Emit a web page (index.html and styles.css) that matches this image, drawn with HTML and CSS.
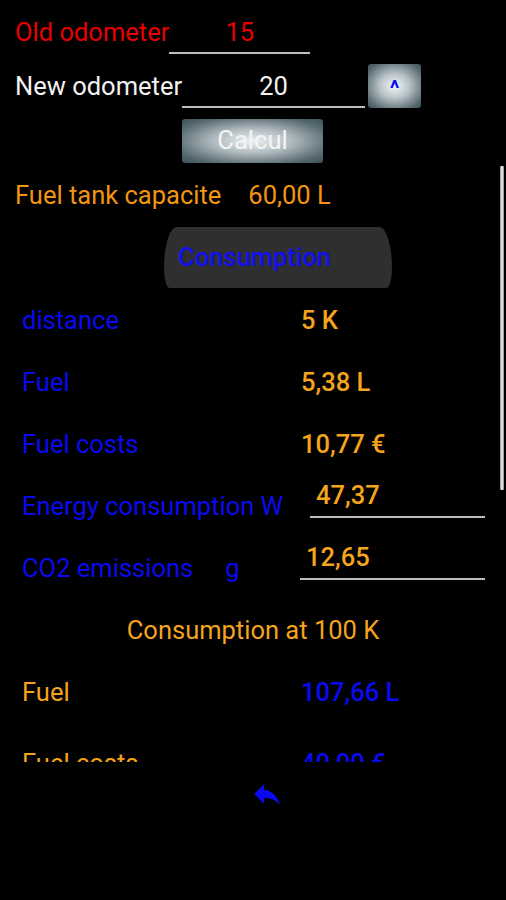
FILE: index.html
```html
<!DOCTYPE html>
<html lang="en">

<head>
    <meta charset="UTF-8">
    <meta name="viewport" content="width=device-width, initial-scale=1.0">
    <title>Consumption</title>
    <link rel="stylesheet" href="styles.css">
</head>

<body>
    <!-- Odometer inputs -->
    <div class="row row-old">
        <span class="label red">Old odometer</span>
        <div class="field field-old red">15</div>
    </div>
    <div class="row row-new">
        <span class="label white">New odometer</span>
        <div class="field field-new white">20</div>
        <button class="up">^</button>
    </div>
    <button class="calc">Calcul</button>

    <!-- Results -->
    <div class="scroll">
        <div class="tank">
            <span>Fuel tank capacite</span>
            <span class="tank-value">60,00 L</span>
        </div>
        <div class="tab">Consumption</div>

        <div class="line">
            <span class="name blue">distance</span>
            <span class="value orange">5 K</span>
        </div>
        <div class="line">
            <span class="name blue">Fuel</span>
            <span class="value orange">5,38 L</span>
        </div>
        <div class="line">
            <span class="name blue">Fuel costs</span>
            <span class="value orange">10,77 €</span>
        </div>
        <div class="line">
            <span class="name blue">Energy consumption W</span>
            <div class="result result-energy orange">47,37</div>
        </div>
        <div class="line">
            <span class="name blue">CO2 emissions<span class="unit">g</span></span>
            <div class="result result-co2 orange">12,65</div>
        </div>

        <div class="subtitle">Consumption at 100 K</div>
        <div class="line">
            <span class="name orange">Fuel</span>
            <span class="value blue">107,66 L</span>
        </div>
        <div class="line line-costs">
            <span class="name orange">Fuel costs</span>
            <span class="value blue">40,00 €</span>
        </div>
        <div class="line">
            <span class="name orange">Energy consumption W</span>
            <span class="value blue">947,40</span>
        </div>
        <div class="line">
            <span class="name orange">CO2 emissions g</span>
            <span class="value blue">253,00</span>
        </div>

        <div class="thumb"></div>
    </div>

    <!-- Back -->
    <div class="nav">
        <svg class="back" viewBox="0 0 24 24" width="34" height="34">
            <path d="M10 9V5l-7 7 7 7v-4.1c5 0 8.5 1.6 11 5.1-1-5-4-10-11-11z" fill="#0a0af0" />
        </svg>
    </div>
</body>

</html>
```

FILE: styles.css
```css
body {
    margin: 0;
    width: 506px;
    height: 900px;
    background-color: #000;
    font-family: Roboto, "Noto Sans", sans-serif;
    font-size: 25.5px;
    overflow: hidden;
}

.red {
    color: #e60000;
}

.white {
    color: #f2f2f2;
}

.blue {
    color: #0a0af0;
}

.orange {
    color: #f5a41c;
}

.row {
    display: flex;
    align-items: flex-end;
    padding-left: 15px;
}

.row-old {
    padding-top: 12px;
}

.row-new {
    margin-top: 10px;
}

.label {
    line-height: 40px;
    margin-bottom: 2px;
}

.field {
    height: 40px;
    line-height: 40px;
    text-align: center;
    border-bottom: 2px solid #bdbdbd;
}

.field-old {
    width: 141px;
}

.field-new {
    width: 183px;
}

.up {
    width: 53px;
    height: 44px;
    margin-left: 3px;
    padding: 4px 0 0 0;
    border: none;
    border-radius: 3px;
    background: radial-gradient(ellipse at center, #f4f7f8 0%, #b7c2c7 40%, #52646c 85%, #3e4f57 100%);
    color: #0a0af0;
    font-family: Roboto, sans-serif;
    font-size: 22px;
    font-weight: bold;
}

.calc {
    display: block;
    width: 141px;
    height: 44px;
    margin: 11px auto 0 182px;
    padding: 0 0 2px 0;
    border: none;
    border-radius: 3px;
    background: radial-gradient(ellipse at center, #eef1f2 0%, #aeb9be 40%, #566870 80%, #3d4f57 100%);
    color: #f4f4f4;
    font-family: Roboto, sans-serif;
    font-size: 25.5px;
}

.scroll {
    position: relative;
    height: 596px;
    margin-top: 3px;
    overflow: hidden;
}

.tank {
    display: flex;
    margin-top: 9px;
    padding-left: 15px;
    line-height: 40px;
    color: #f29512;
}

.tank-value {
    margin-left: 27px;
}

.tab {
    width: 214px;
    height: 61px;
    margin: 12px 0 0 164px;
    padding-left: 14px;
    line-height: 61px;
    background-color: #2f2f2f;
    border-radius: 14px 14px 6px 6px / 44px 44px 22px 22px;
    color: #1010f0;
    font-weight: 500;
}

.line {
    display: flex;
    align-items: center;
    height: 62px;
}

.tab + .line {
    margin-top: 1px;
}

.line-costs {
    margin-top: 9px;
}

.name {
    width: 279px;
    padding-left: 22px;
    white-space: nowrap;
}

.unit {
    margin-left: 32px;
}

.value {
    font-weight: 500;
}

.result {
    align-self: flex-start;
    height: 41px;
    line-height: 40px;
    padding-left: 6px;
    border-bottom: 2px solid #bdbdbd;
    font-weight: 500;
}

.result-energy {
    width: 169px;
    margin-left: 9px;
}

.result-co2 {
    width: 179px;
    margin-left: -1px;
}

.subtitle {
    height: 62px;
    line-height: 62px;
    text-align: center;
    color: #f5a41c;
}

.thumb {
    position: absolute;
    top: 0;
    right: 2px;
    width: 4px;
    height: 324px;
    border-radius: 1px;
    background: linear-gradient(to right, #8a8a8a, #f0f0f0 45%, #c8c8c8 75%, #7a7a7a);
}

.nav {
    display: flex;
    justify-content: center;
    padding: 15px 0 0 28px;
}
```
